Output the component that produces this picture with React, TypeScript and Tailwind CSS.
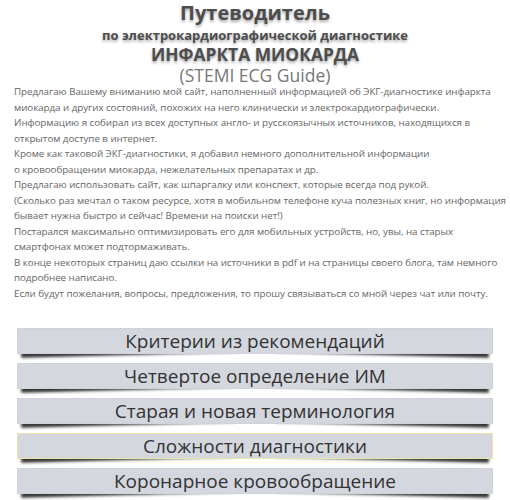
const lines = [
  "Предлагаю Вашему вниманию мой сайт, наполненный информацией об ЭКГ-диагностике инфаркта",
  "миокарда и других состояний, похожих на него клинически и электрокардиографически.",
  "Информацию я собирал из всех доступных англо- и русскоязычных источников, находящихся в",
  "открытом доступе в интернет.",
  "Кроме как таковой ЭКГ-диагностики, я добавил немного дополнительной информации",
  "о кровообращении миокарда, нежелательных препаратах и др.",
  "Предлагаю использовать сайт, как шпаргалку или конспект, которые всегда под рукой.",
  "(Сколько раз мечтал о таком ресурсе, хотя в мобильном телефоне куча полезных книг, но информация",
  "бывает нужна быстро и сейчас! Времени на поиски нет!)",
  "Постарался максимально оптимизировать его для мобильных устройств, но, увы, на старых",
  "смартфонах может подтормаживать.",
  "В конце некоторых страниц даю ссылки на источники в pdf и на страницы своего блога, там немного",
  "подробнее написано.",
  "Если будут пожелания, вопросы, предложения, то прошу связываться со мной через чат или почту.",
];

const menu = [
  "Критерии из рекомендаций",
  "Четвертое определение ИМ",
  "Старая и новая терминология",
  "Сложности диагностики",
  "Коронарное кровообращение",
];

export default function App() {
  return (
    <div className="isolate relative w-[510px] h-[500px] overflow-hidden bg-white font-['Open_Sans',sans-serif]">
      <div className="flex flex-col items-center text-[#4d4d4d] font-bold [text-shadow:0_2px_3px_rgba(0,0,0,0.35)]">
        <h1 className="text-[20px] leading-[26px]">Путеводитель</h1>
        <h2 className="text-[13px] leading-[18px]">по электрокардиографической диагностике</h2>
        <h2 className="text-[17.4px] leading-[21px]">ИНФАРКТА МИОКАРДА</h2>
        <p className="text-[17.5px] leading-[21px] font-normal text-[#777] [text-shadow:none]">(STEMI ECG Guide)</p>
      </div>
      <div className="px-[14px] text-[9.8px] tracking-[-0.05px] leading-[15.5px] text-[#666] whitespace-nowrap mt-[-2px]">
        {lines.map((l) => (
          <div key={l}>{l}</div>
        ))}
      </div>
      <div className="flex flex-col gap-[9px] px-[17px] mt-[27px]">
        {menu.map((m, i) => (
          <div
            key={m}
            className={
              "relative h-[26px] flex items-center justify-center bg-[#d4d7de] text-[#333] text-[19px] border " +
              (i === 3 ? "border-[#eee2a8]" : "border-[#cfd2d9]") +
              " before:content-[''] before:absolute before:-z-10 before:left-[3px] before:bottom-[2px] before:w-[45%] before:h-[10px] before:shadow-[0_4px_3px_rgba(0,0,0,0.8)] before:-rotate-[1.5deg]" +
              " after:content-[''] after:absolute after:-z-10 after:right-[3px] after:bottom-[2px] after:w-[45%] after:h-[10px] after:shadow-[0_4px_3px_rgba(0,0,0,0.8)] after:rotate-[1.5deg]"
            }
          >
            {m}
          </div>
        ))}
      </div>
    </div>
  );
}
